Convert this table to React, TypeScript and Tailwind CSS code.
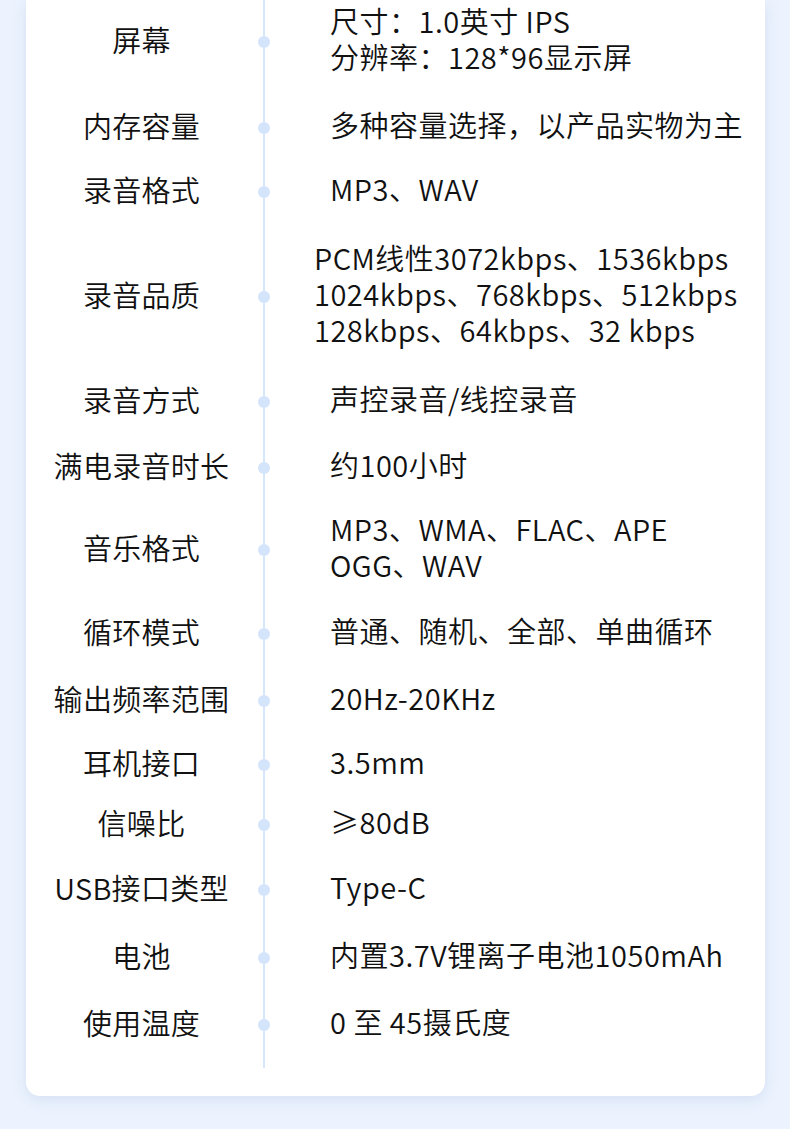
import React from "react";

type Row = { label: string; values: string[]; cls: string; shift?: boolean };

const rows: Row[] = [
  { label: "屏幕", values: ["尺寸：1.0英寸 IPS", "分辨率：128*96显示屏"], cls: "pt-[6px] pb-[7px]" },
  { label: "内存容量", values: ["多种容量选择，以产品实物为主"], cls: "pt-[25px] pb-[14px]" },
  { label: "录音格式", values: ["MP3、WAV"], cls: "pt-[14px] pb-[32px]" },
  {
    label: "录音品质",
    values: ["PCM线性3072kbps、1536kbps", "1024kbps、768kbps、512kbps", "128kbps、64kbps、32 kbps"],
    cls: "pt-[1px] pb-[1px]",
    shift: true,
  },
  { label: "录音方式", values: ["声控录音/线控录音"], cls: "pt-[32px] pb-[15px]" },
  { label: "满电录音时长", values: ["约100小时"], cls: "pt-[15px] pb-[23px]" },
  { label: "音乐格式", values: ["MP3、WMA、FLAC、APE", "OGG、WAV"], cls: "pt-[5px] pb-[6px]" },
  { label: "循环模式", values: ["普通、随机、全部、单曲循环"], cls: "pt-[24px] pb-[16px]" },
  { label: "输出频率范围", values: ["20Hz-20KHz"], cls: "pt-[15px] pb-[14px]" },
  { label: "耳机接口", values: ["3.5mm"], cls: "pt-[14px] pb-[12px]" },
  { label: "信噪比", values: ["≥80dB"], cls: "pt-[12px] pb-[15px]" },
  { label: "USB接口类型", values: ["Type-C"], cls: "pt-[14px] pb-[16px]" },
  { label: "电池", values: ["内置3.7V锂离子电池1050mAh"], cls: "pt-[16px] pb-[16px]" },
  { label: "使用温度", values: ["0 至 45摄氏度"], cls: "pt-[15px] pb-[25px]" },
];

export default function App() {
  return (
    <div
      className="min-h-[1129px] w-[790px] bg-[#ecf3fe] font-[350] text-[#111111]"
      style={{ fontFamily: '"Noto Sans CJK SC", "Noto Sans", sans-serif' }}
    >
      <div className="ml-[26px] w-[739px] rounded-b-[14px] bg-white pb-[28px] shadow-[0_4px_14px_rgba(170,190,220,0.35)]">
        {rows.map((r) => (
          <div key={r.label} className="flex">
            <div className={`flex w-[231px] items-center justify-center text-[29px] leading-[36px] ${r.cls}`}>
              <div className="-translate-y-[3px] whitespace-nowrap tracking-[0.3px]">{r.label}</div>
            </div>
            <div
              className={`flex w-[14px] items-center justify-center bg-[linear-gradient(#d6e6fc,#d6e6fc)] bg-[length:2px_100%] bg-center bg-no-repeat ${r.cls}`}
            >
              <div className="h-[12px] w-[12px] rounded-full bg-[#d3e4fb]" />
            </div>
            <div
              className={`flex flex-1 flex-col justify-center text-[29px] leading-[36px] ${r.shift ? "pl-[43px]" : "pl-[59px]"} ${r.cls}`}
            >
              {r.values.map((v) => (
                <div key={v} className="-translate-y-[4px] whitespace-nowrap tracking-[0.5px]">
                  {v}
                </div>
              ))}
            </div>
          </div>
        ))}
      </div>
    </div>
  );
}
